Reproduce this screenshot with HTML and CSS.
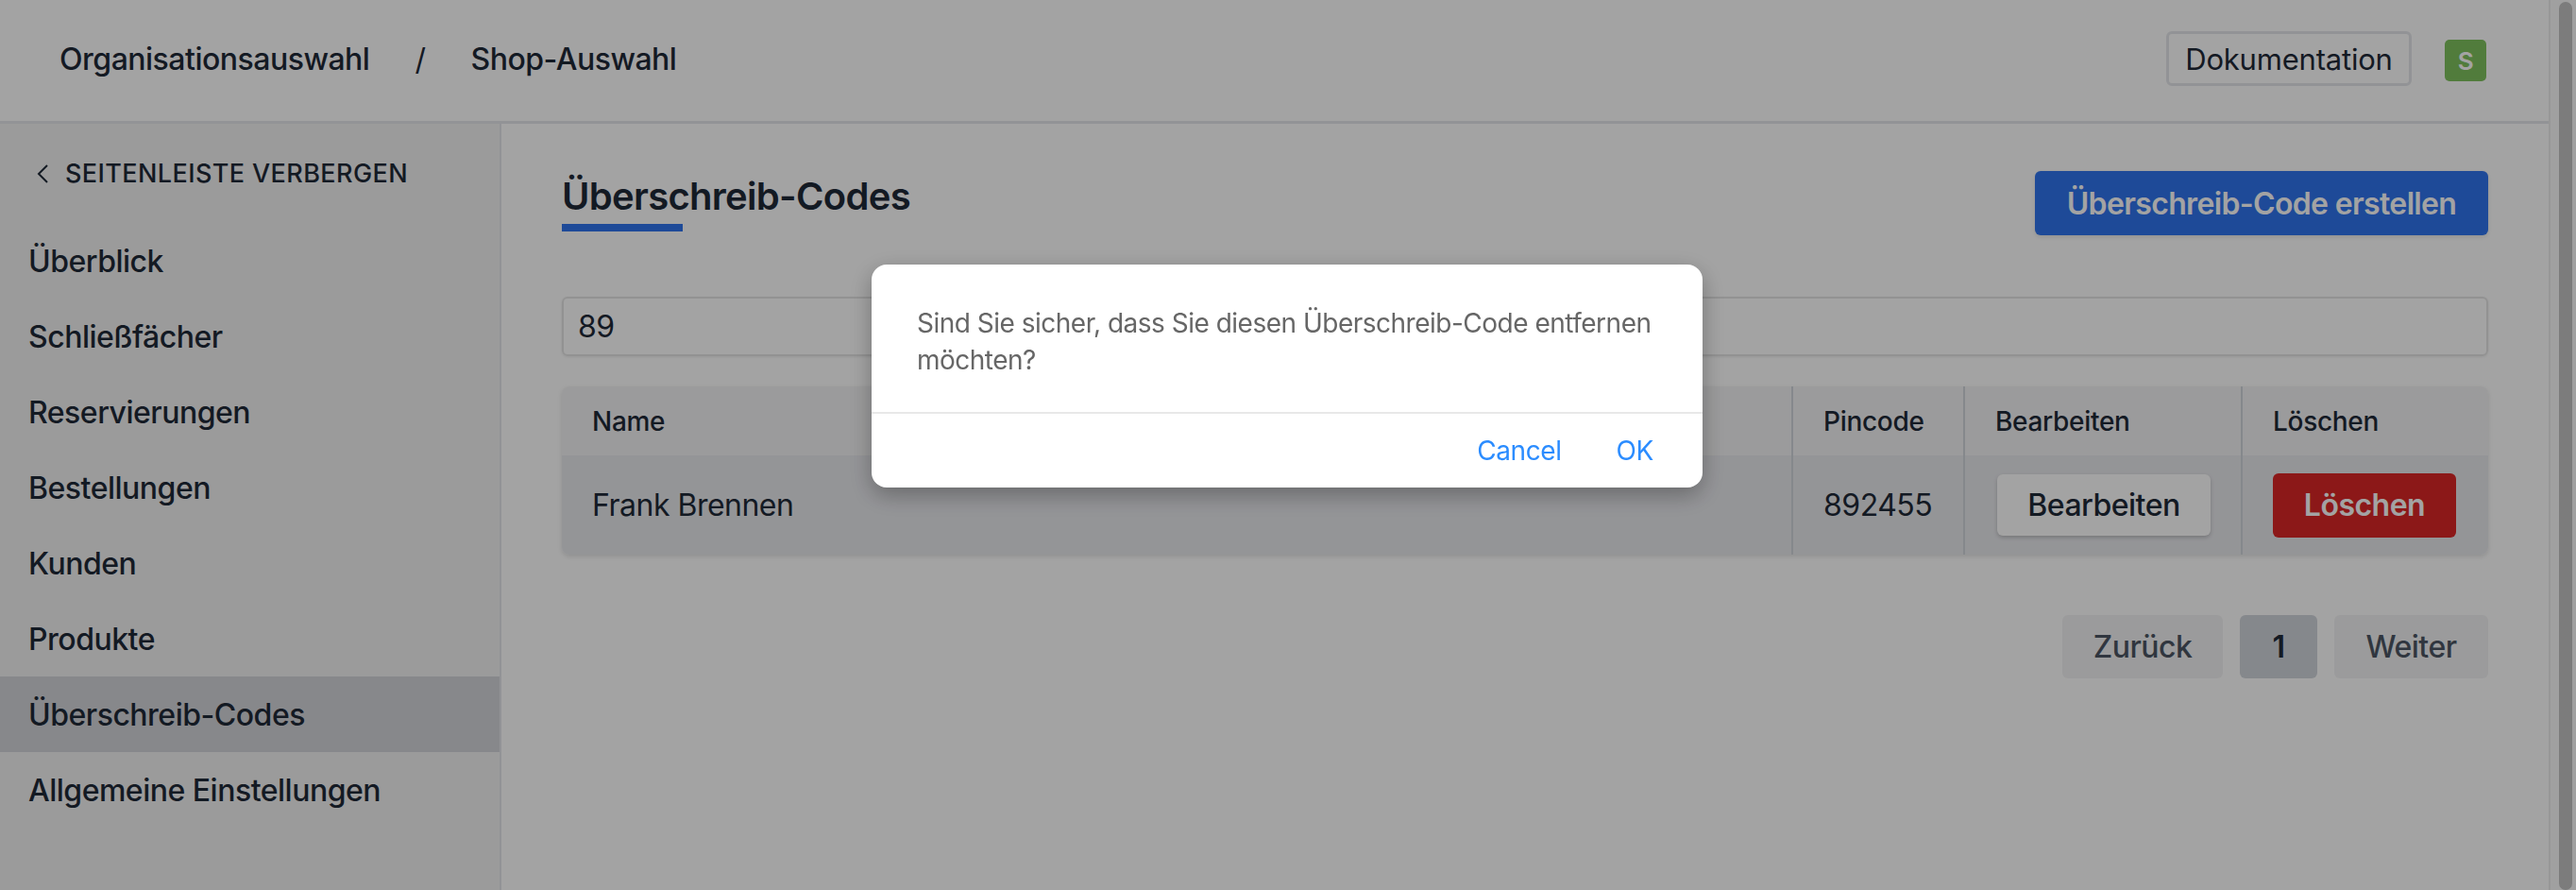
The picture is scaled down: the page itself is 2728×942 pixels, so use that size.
FILE: index.html
```html
<!DOCTYPE html>
<html lang="de">
  <head>
    <meta charset="utf-8">
    <title>Überschreib-Codes</title>
    <link rel="stylesheet" href="styles.css">
  </head>
  <body>
    <div class="page">
      <header class="topbar">
        <nav class="crumbs">
          <span>Organisationsauswahl</span>
          <span class="crumb-sep">/</span>
          <span>Shop-Auswahl</span>
        </nav>
        <div class="topbar-right">
          <a class="doc-link">Dokumentation</a>
          <span class="avatar">S</span>
        </div>
      </header>
      <div class="layout">
        <aside class="sidebar">
          <div class="collapse">
            <svg class="collapse-icon" viewBox="0 0 14 24" width="14" height="24">
              <path d="M12 3 L3 12 L12 21" fill="none" stroke="currentColor" stroke-width="2"/>
            </svg>
            <span>SEITENLEISTE VERBERGEN</span>
          </div>
          <ul class="nav">
            <li>Überblick</li>
            <li>Schließfächer</li>
            <li>Reservierungen</li>
            <li>Bestellungen</li>
            <li>Kunden</li>
            <li>Produkte</li>
            <li class="active">Überschreib-Codes</li>
            <li>Allgemeine Einstellungen</li>
          </ul>
        </aside>
        <main class="content">
          <div class="title-row">
            <h1 class="title">Überschreib-Codes</h1>
            <button class="btn btn-primary">Überschreib-Code erstellen</button>
          </div>
          <div class="search">89</div>
          <table class="codes">
            <colgroup>
              <col>
              <col class="col-pin">
              <col class="col-edit">
              <col class="col-del">
            </colgroup>
            <thead>
              <tr>
                <th>Name</th>
                <th>Pincode</th>
                <th>Bearbeiten</th>
                <th>Löschen</th>
              </tr>
            </thead>
            <tbody>
              <tr>
                <td>Frank Brennen</td>
                <td>892455</td>
                <td><button class="btn btn-edit">Bearbeiten</button></td>
                <td><button class="btn btn-delete">Löschen</button></td>
              </tr>
            </tbody>
          </table>
          <div class="pager">
            <span class="page-btn page-prev">Zurück</span>
            <span class="page-btn page-current">1</span>
            <span class="page-btn page-next">Weiter</span>
          </div>
        </main>
      </div>
    </div>
    <div class="scrollbar"><div class="scroll-thumb"></div></div>

    <div class="overlay">
      <div class="dialog">
        <p class="dialog-text">Sind Sie sicher, dass Sie diesen Überschreib-Code entfernen möchten?</p>
        <div class="dialog-actions">
          <a class="dialog-link">Cancel</a>
          <a class="dialog-link">OK</a>
        </div>
      </div>
    </div>
  </body>
</html>
```

FILE: styles.css
```css
* {
  box-sizing: border-box;
}
html, body {
  height: 100%;
}
body {
  margin: 0;
  display: flex;
  overflow: hidden;
  background-color: #fff;
  color: #1f2937;
  font-family: Inter, "Liberation Sans", sans-serif;
  font-size: 32px;
  letter-spacing: -0.5px;
}
.page {
  flex: 1;
  min-width: 0;
  display: flex;
  flex-direction: column;
}
.scrollbar {
  width: 29px;
  padding: 2px 4px 0 9px;
  background-color: #fafafa;
  border-left: 2px solid #ececec;
}
.scroll-thumb {
  height: 100%;
  background-color: #c2c2c2;
  border-radius: 8px;
}

.topbar {
  height: 131px;
  flex: none;
  display: flex;
  align-items: center;
  justify-content: space-between;
  padding: 0 66px 4px 63px;
  border-bottom: 3px solid #e5e7eb;
}
.crumbs {
  display: flex;
  gap: 48px;
  margin-top: 1px;
  font-weight: 500;
}
.crumb-sep {
  font-weight: 400;
}
.topbar-right {
  display: flex;
  align-items: center;
  gap: 35px;
}
.doc-link {
  width: 260px;
  height: 58px;
  display: flex;
  align-items: center;
  justify-content: center;
  border: 3px solid #e5e7eb;
  border-radius: 6px;
  font-size: 31px;
  letter-spacing: -0.2px;
}
.avatar {
  width: 44px;
  height: 44px;
  margin-top: 4px;
  display: flex;
  align-items: center;
  justify-content: center;
  background-color: #7fc35e;
  border-radius: 5px;
  color: #fff;
  font-size: 26px;
  font-weight: 600;
}

.layout {
  flex: 1;
  display: flex;
}
.sidebar {
  width: 531px;
  flex: none;
  background-color: #f3f3f3;
  border-right: 2px solid #e5e7eb;
}
.collapse {
  height: 105px;
  display: flex;
  align-items: center;
  gap: 17px;
  padding: 0 0 0 38px;
  font-size: 27px;
  font-weight: 500;
  letter-spacing: 0.4px;
}
.collapse-icon {
  flex: none;
}
.nav {
  list-style: none;
  margin: 0;
  padding: 0;
}
.nav li {
  height: 80px;
  display: flex;
  align-items: center;
  padding-left: 30px;
  font-weight: 500;
}
.nav .active {
  background-color: #d4d5d9;
}

.content {
  flex: 1;
  min-width: 0;
  padding: 50px 64px 0;
}
.title-row {
  display: flex;
  justify-content: space-between;
  align-items: flex-start;
}
.title {
  margin: 0;
  font-size: 40px;
  font-weight: 600;
  line-height: 54px;
  letter-spacing: -0.7px;
}
.title::after {
  content: "";
  display: block;
  width: 128px;
  height: 8px;
  margin-top: 2px;
  background-color: #3074ee;
}
.btn {
  border: none;
  border-radius: 6px;
  font-family: inherit;
  font-size: 32px;
  font-weight: 600;
  letter-spacing: -0.5px;
}
.btn-primary {
  width: 480px;
  height: 68px;
  background-color: #3074ee;
  color: #fff;
  letter-spacing: -0.65px;
  box-shadow: 0 2px 4px rgba(0, 0, 0, 0.1);
}
.search {
  height: 63px;
  margin-top: 65px;
  padding-left: 15px;
  display: flex;
  align-items: center;
  border: 2px solid #e5e5e5;
  border-radius: 6px;
  box-shadow: 0 1px 3px rgba(0, 0, 0, 0.08);
}
.codes {
  width: 100%;
  margin-top: 32px;
  table-layout: fixed;
  border-collapse: separate;
  border-spacing: 0;
  border-radius: 8px;
  overflow: hidden;
  box-shadow: 0 2px 5px rgba(0, 0, 0, 0.12);
}
.col-pin {
  width: 182px;
}
.col-edit {
  width: 294px;
}
.col-del {
  width: 262px;
}
.codes th {
  height: 73px;
  padding: 0 0 0 32px;
  background-color: #f3f3f4;
  font-size: 28px;
  font-weight: 500;
  letter-spacing: -0.3px;
  text-align: left;
}
.codes td {
  height: 105px;
  padding: 0 0 0 32px;
  background-color: #e8e9ed;
}
.codes th + th,
.codes td + td {
  border-left: 2px solid #d1d5db;
}
.btn-edit {
  width: 226px;
  height: 65px;
  margin-left: 2px;
  background-color: #fff;
  color: #1f2937;
  font-weight: 500;
  box-shadow: 0 2px 4px rgba(0, 0, 0, 0.2);
}
.btn-delete {
  width: 194px;
  height: 68px;
  background-color: #dc2626;
  color: #fff;
}
.pager {
  display: flex;
  justify-content: flex-end;
  gap: 18px;
  margin-top: 64px;
}
.page-btn {
  height: 67px;
  display: flex;
  align-items: center;
  justify-content: center;
  border-radius: 6px;
  font-weight: 500;
}
.page-prev {
  width: 170px;
  background-color: #f3f3f4;
  color: #4b5563;
}
.page-current {
  width: 82px;
  background-color: #d1d5db;
  color: #1f2937;
  font-weight: 600;
}
.page-next {
  width: 163px;
  background-color: #f3f3f4;
  color: #4b5563;
}

.overlay {
  position: fixed;
  inset: 0;
  display: flex;
  justify-content: center;
  align-items: flex-start;
  padding: 280px 2px 0 0;
  background-color: rgba(0, 0, 0, 0.36);
}
.dialog {
  width: 880px;
  height: 236px;
  display: flex;
  flex-direction: column;
  background-color: #fff;
  border-radius: 16px;
  box-shadow: 0 8px 24px rgba(0, 0, 0, 0.3);
}
.dialog-text {
  height: 158px;
  flex: none;
  margin: 0;
  padding: 43px 48px 0;
  border-bottom: 2px solid #e8e8e8;
  color: #666;
  font-size: 28px;
  line-height: 39px;
  letter-spacing: -0.5px;
}
.dialog-actions {
  flex: 1;
  display: flex;
  align-items: center;
  justify-content: flex-end;
  gap: 58px;
  padding: 0 52px 0 0;
}
.dialog-link {
  color: #2b8cff;
  font-size: 28px;
  letter-spacing: -0.4px;
}
```
